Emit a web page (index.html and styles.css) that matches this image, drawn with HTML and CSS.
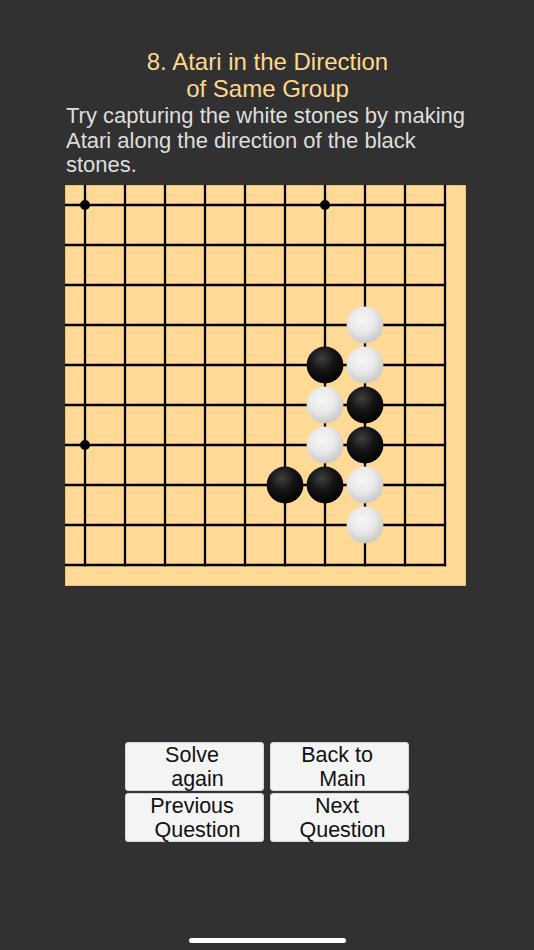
FILE: index.html
```html
<!DOCTYPE html>
<html lang="en">
<head>
<meta charset="utf-8">
<title>Atari in the Direction of Same Group</title>
<link rel="stylesheet" href="styles.css">
</head>
<body>
<main class="screen">
  <section class="content">
    <h1 class="title">8. Atari in the Direction<br>of Same Group</h1>
    <p class="desc">Try capturing the white stones by making<br>Atari along the direction of the black<br>stones.</p>
    <svg class="board" width="401" height="401" viewBox="0 0 401 401" xmlns="http://www.w3.org/2000/svg">
      <defs>
        <radialGradient id="gw" cx="0.42" cy="0.36" r="0.66">
          <stop offset="0" stop-color="#f7f7f7"/>
          <stop offset="0.55" stop-color="#e8e8e8"/>
          <stop offset="1" stop-color="#c6c6c6"/>
        </radialGradient>
        <radialGradient id="gb" cx="0.42" cy="0.32" r="0.68">
          <stop offset="0" stop-color="#3e3e3e"/>
          <stop offset="0.5" stop-color="#161616"/>
          <stop offset="1" stop-color="#000000"/>
        </radialGradient>
      </defs>
      <rect x="0.5" y="0.5" width="400" height="400" fill="#ffd996" stroke="#e8c27c" stroke-width="1"/>
      <g stroke="#000" stroke-width="2.3" stroke-linecap="square">
        <line x1="20" y1="0" x2="20" y2="380"/>
        <line x1="60" y1="0" x2="60" y2="380"/>
        <line x1="100" y1="0" x2="100" y2="380"/>
        <line x1="140" y1="0" x2="140" y2="380"/>
        <line x1="180" y1="0" x2="180" y2="380"/>
        <line x1="220" y1="0" x2="220" y2="380"/>
        <line x1="260" y1="0" x2="260" y2="380"/>
        <line x1="300" y1="0" x2="300" y2="380"/>
        <line x1="340" y1="0" x2="340" y2="380"/>
        <line x1="380" y1="0" x2="380" y2="380"/>
        <line x1="0" y1="20" x2="380" y2="20"/>
        <line x1="0" y1="60" x2="380" y2="60"/>
        <line x1="0" y1="100" x2="380" y2="100"/>
        <line x1="0" y1="140" x2="380" y2="140"/>
        <line x1="0" y1="180" x2="380" y2="180"/>
        <line x1="0" y1="220" x2="380" y2="220"/>
        <line x1="0" y1="260" x2="380" y2="260"/>
        <line x1="0" y1="300" x2="380" y2="300"/>
        <line x1="0" y1="340" x2="380" y2="340"/>
        <line x1="0" y1="380" x2="380" y2="380"/>
      </g>
      <g fill="#000">
        <circle cx="20" cy="20" r="5"/>
        <circle cx="260" cy="20" r="5"/>
        <circle cx="20" cy="260" r="5"/>
        <circle cx="260" cy="260" r="5"/>
      </g>
      <g fill="url(#gw)">
        <circle cx="300" cy="140" r="18.4"/>
        <circle cx="300" cy="180" r="18.4"/>
        <circle cx="260" cy="220" r="18.4"/>
        <circle cx="260" cy="260" r="18.4"/>
        <circle cx="300" cy="300" r="18.4"/>
        <circle cx="300" cy="340" r="18.4"/>
      </g>
      <g fill="url(#gb)">
        <circle cx="260" cy="180" r="18.4"/>
        <circle cx="300" cy="220" r="18.4"/>
        <circle cx="300" cy="260" r="18.4"/>
        <circle cx="220" cy="300" r="18.4"/>
        <circle cx="260" cy="300" r="18.4"/>
      </g>
    </svg>
  </section>
  <nav class="buttons">
    <button class="btn"><span class="l1">Solve</span><span class="l2">again</span></button>
    <button class="btn"><span class="l1">Back to</span><span class="l2">Main</span></button>
    <button class="btn"><span class="l1">Previous</span><span class="l2">Question</span></button>
    <button class="btn"><span class="l1">Next</span><span class="l2">Question</span></button>
  </nav>
  <div class="home-indicator"></div>
</main>
</body>
</html>
```

FILE: styles.css
```css
html, body {
  margin: 0;
  padding: 0;
  background: #313131;
}

.screen {
  width: 534px;
  height: 950px;
  display: flex;
  flex-direction: column;
  align-items: center;
  font-family: "Liberation Sans", Arial, sans-serif;
  overflow: hidden;
}

.content {
  width: 401px;
  margin-right: 3px;
  padding-top: 49px;
  display: flex;
  flex-direction: column;
}

.title {
  margin: 0;
  padding-left: 4px;
  font-size: 24px;
  font-weight: normal;
  line-height: 26.5px;
  color: #fdd88d;
  text-align: center;
  white-space: nowrap;
}

.desc {
  margin: 2px 0 0 0;
  font-size: 22px;
  line-height: 24.7px;
  color: #dedede;
  white-space: nowrap;
  padding-left: 1px;
}

.board {
  display: block;
  margin-top: 7px;
}

.buttons {
  margin-top: 156px;
  display: grid;
  grid-template-columns: 139px 139px;
  grid-auto-rows: 49px;
  column-gap: 6px;
  row-gap: 2px;
}

.btn {
  margin: 0;
  padding: 0;
  background: #f4f4f4;
  border: 1px solid #d6d6d6;
  border-radius: 3px;
  font-family: "Liberation Sans", Arial, sans-serif;
  font-size: 21.5px;
  line-height: 24px;
  color: #111;
  display: flex;
  flex-direction: column;
  align-items: center;
  justify-content: flex-start;
  overflow: visible;
}

.l1 {
  display: block;
  padding-right: 5px;
}

.l2 {
  display: block;
  padding-left: 6px;
}

.home-indicator {
  margin-top: auto;
  margin-bottom: 7px;
  width: 157px;
  height: 5px;
  border-radius: 3px;
  background: #ffffff;
}
```
